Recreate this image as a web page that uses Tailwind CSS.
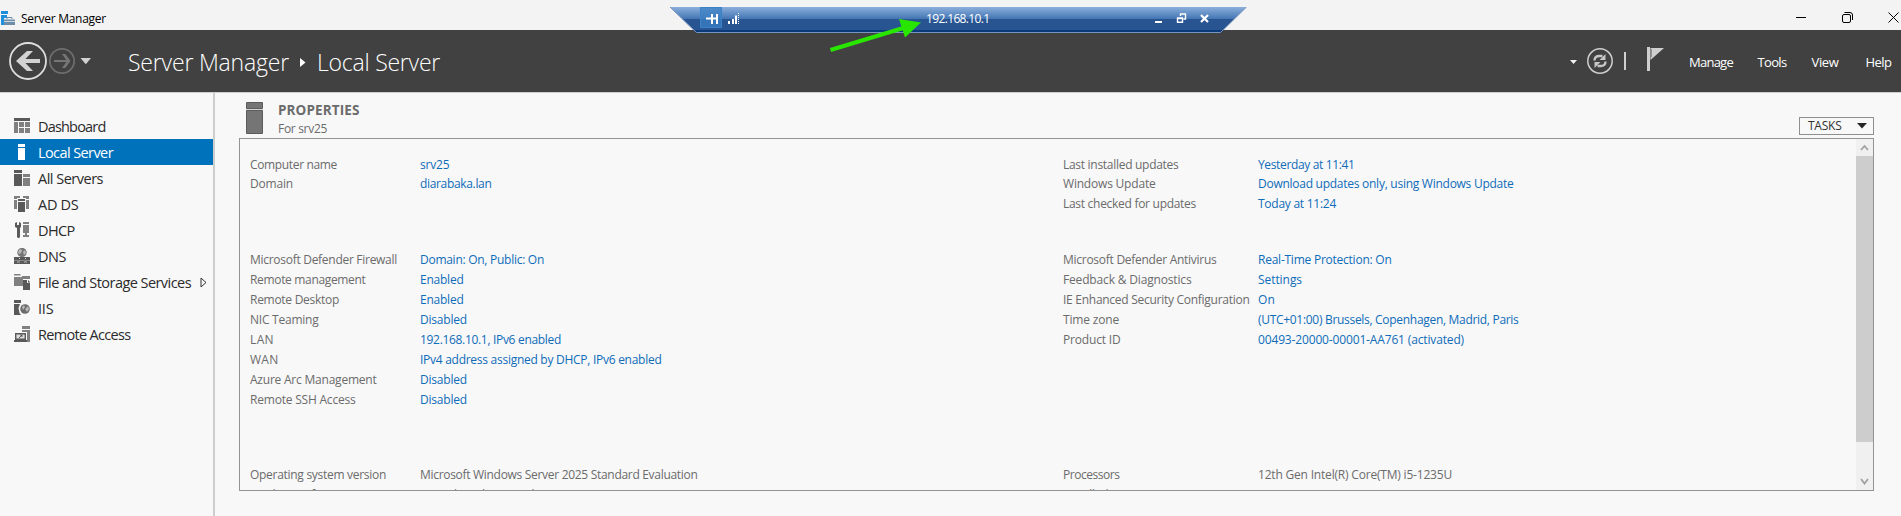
<!DOCTYPE html>
<html lang="en">
<head>
<meta charset="utf-8">
<title>Server Manager</title>
<script src="https://cdn.jsdelivr.net/npm/@tailwindcss/browser@4"></script>
</head>
<body class="relative flex h-[516px] w-[1901px] flex-col overflow-hidden bg-[#f8f8f8] font-['Open_Sans','Noto_Sans',sans-serif] text-[12px] text-[#6b6b6b]">

<!-- Window title bar -->
<div class="flex h-[30px] shrink-0 items-start bg-[#f3f3f3] text-black">
  <svg class="mt-[11px] h-[15px] w-[16px]" viewBox="0 0 16 15"><path d="M1 0h7v3H1zM1 4h6v3H4v7H1z" fill="#1e8fdc"/><path d="M4 8.500h11V14H4z" fill="#6f8da8"/><path d="M4 10.500h11" stroke="#c8d6e2"/><path d="M7 8V6.500h5V8" fill="none" stroke="#6f8da8"/></svg>
  <span data-w="83.5" class="mt-[10px] ml-[5px] leading-[18px] whitespace-nowrap">Server Manager</span>
  <div class="mt-[12px] mr-[2px] ml-auto flex gap-[35px]">
    <svg class="h-[11px] w-[11px]" viewBox="0 0 11 11"><path d="M0 5.500h10" stroke="#000"/></svg>
    <svg class="h-[11px] w-[11px]" viewBox="0 0 11 11" fill="none" stroke="#000"><rect x=".5" y="2.500" width="8" height="8" rx="1.500"/><path d="M2.500 .5h5.500a2.500 2.500 0 0 1 2.500 2.500v5"/></svg>
    <svg class="h-[11px] w-[11px]" viewBox="0 0 11 11"><path d="M.5 .5l10 10M10.500 .5l-10 10" stroke="#000"/></svg>
  </div>
</div>

<!-- Header -->
<header class="flex h-[62px] shrink-0 items-start bg-[#414141] text-white">
  <svg class="mt-[11px] ml-[8px] h-[40px] w-[84px]" viewBox="8 41 84 40" fill="none">
    <circle cx="28" cy="61" r="18" stroke="#dedede" stroke-width="1.800"/>
    <path d="M40 61H20" stroke="#d2d2d2" stroke-width="4"/><path d="M27 51h6l-9.500 10L33 71h-6L16 61z" fill="#d2d2d2"/>
    <circle cx="62" cy="61" r="12.200" stroke="#6e6e6e" stroke-width="1.700"/>
    <path d="M54 61h13" stroke="#757575" stroke-width="2"/><path d="M62 54h3.300l5.200 7-5.200 7H62l5-7z" fill="#757575"/>
    <path d="M80.500 58h10.500l-5.200 6.300z" fill="#d2d2d2"/>
  </svg>
  <div class="ml-[36px] flex items-center pt-[16px] text-[23px] leading-[32px] font-light whitespace-nowrap">
    <span data-w="159.5">Server Manager</span>
    <svg class="mr-[11px] ml-[11px] h-[9px] w-[6px]" viewBox="0 0 6 9"><path d="M0 0l5.500 4.500L0 9z" fill="#fff"/></svg>
    <span data-w="121.5">Local Server</span>
  </div>
  <svg class="mt-[14px] ml-auto h-[34px] w-[100px] shrink-0" viewBox="1568 44 100 34" fill="none">
    <path d="M1570 60h7l-3.500 4z" fill="#f2f2f2"/>
    <circle cx="1600" cy="61" r="12.200" stroke="#cfcfcf" stroke-width="1.500"/>
    <path d="M1594.500 60.500c0-3.200 2.500-4.500 5-4.500h3M1605.500 61.500c0 3.200-2.500 4.500-5 4.500h-3" stroke="#c6c6c6" stroke-width="2.300"/>
    <path d="M1605.500 54v6h-6zM1594.500 68v-6h6z" fill="#c6c6c6"/>
    <path d="M1625 52v18" stroke="#cfcfcf" stroke-width="2"/>
    <path d="M1648.500 47v24" stroke="#cfcfcf" stroke-width="3"/><path d="M1650.500 48h13.500l-13.500 12z" fill="#cfcfcf"/><path d="M1651.500 49v8" stroke="#777" stroke-width=".7"/>
  </svg>
  <nav class="ml-[21px] flex w-[212px] pt-[22px] text-[13px] leading-[20px] whitespace-nowrap">
    <span class="w-[68.500px]"><span data-w="42.500">Manage</span></span>
    <span class="w-[54px]"><span data-w="27.500">Tools</span></span>
    <span class="w-[54px]"><span data-w="25.500">View</span></span>
    <span data-w="24.500">Help</span>
  </nav>
</header>

<main class="flex min-h-0 grow border-t border-[#cfcfcf]">
  <!-- Role navigation -->
  <aside class="flex w-[215px] shrink-0 flex-col border-r-2 border-[#cecece] pt-[20px] text-[14.500px] leading-[28px] whitespace-nowrap text-[#2b2b2b]">
    <div class="flex h-[26px] items-start pl-[14px]">
      <svg class="mt-[5px] mr-[8px] h-4 w-4" viewBox="0 0 16 16"><path d="M0 0h16v3H0z" fill="#595959"/><path d="M0 4h4v11H0zM5 4h5v5H5zM11 4h5v5h-5zM5 10h5v5H5zM11 10h5v5h-5z" fill="#808080"/></svg>
      <span data-w="66">Dashboard</span></div>
    <div class="flex h-[26px] items-start bg-[#0072bc] pl-[14px] text-white">
      <svg class="mt-[5px] mr-[8px] h-4 w-4" viewBox="0 0 16 16"><path d="M4 0h7v3H4zM4 4h7v12H4z" fill="#fff"/></svg>
      <span data-w="73.5">Local Server</span></div>
    <div class="flex h-[26px] items-start pl-[14px]">
      <svg class="mt-[5px] mr-[8px] h-4 w-4" viewBox="0 0 16 16"><path d="M0 0h8v3H0zM0 4h8v12H0z" fill="#595959"/><path d="M9 4h7v3H9zM9 8h7v8H9z" fill="#808080"/></svg>
      <span data-w="63.500">All Servers</span></div>
    <div class="flex h-[26px] items-start pl-[14px]">
      <svg class="mt-[5px] mr-[8px] h-4 w-4" viewBox="0 0 16 16"><path d="M0 0h6v2H3v1H0zM0 4h3v9H0zM9 0h6v3h-3V2H9zM12 4h3v9h-3z" fill="#808080"/><path d="M4 3h7v2H4zM4 6h7v10H4z" fill="#595959"/></svg>
      <span data-w="39">AD DS</span></div>
    <div class="flex h-[26px] items-start pl-[14px]">
      <svg class="mt-[5px] mr-[8px] h-4 w-4" viewBox="0 0 16 16"><path d="M1 1l2-1v3h2V0l2 1v4L6 6v8.500a1.500 1.500 0 0 1-3 0V6L1 5z" fill="#595959"/><path d="M9 0h6v2H9zM9 3h6v8H9zM11 11h2v2h2v2H9v-2h2z" fill="#808080"/></svg>
      <span data-w="35">DHCP</span></div>
    <div class="flex h-[26px] items-start pl-[14px]">
      <svg class="mt-[5px] mr-[8px] h-4 w-4" viewBox="0 0 16 16"><circle cx="8" cy="4.500" r="4.700" fill="#777"/><path d="M5 2l2-1 1 2-2 3-2-1zM9 4l2-2 1 3-2 2z" fill="#bbb"/><path d="M0 9h16v3H0zM0 13h16v3H0z" fill="#595959"/><path d="M0 12.500h16" stroke="#888"/><path d="M5 10h1v1H5zM11 10h1v1h-1z" fill="#ddd"/><path d="M3 14h3M10 14h3" stroke="#bbb"/></svg>
      <span data-w="26.500">DNS</span></div>
    <div class="flex h-[26px] items-start pl-[14px]">
      <svg class="mt-[5px] mr-[8px] h-4 w-4" viewBox="0 0 16 16"><path d="M0 0h6l1 1.500H0zM0 3h8v9H0zM8 2h8v3H9v7H8z" fill="#808080"/><path d="M9 6h4v3h3v7H9z" fill="#595959"/><path d="M14 6l2.500 2.500H14z" fill="#595959"/></svg>
      <span data-w="151.500">File and Storage Services</span>
      <svg class="mt-[8px] ml-[9px] h-[11px] w-[8px]" viewBox="0 0 8 11"><path d="M1 1l5 4.500L1 10z" fill="none" stroke="#333"/></svg></div>
    <div class="flex h-[26px] items-start pl-[14px]">
      <svg class="mt-[5px] mr-[8px] h-4 w-4" viewBox="0 0 16 16"><path d="M0 0h7v3H0zM0 4h6L4.500 8l1 5 1.500 2H0z" fill="#595959"/><circle cx="11" cy="9" r="4.800" fill="#6b6b6b"/><path d="M8 7l2-2 1 2-2 3zM11 9l3-3 1 3-2 3z" fill="#b8b8b8"/></svg>
      <span data-w="14">IIS</span></div>
    <div class="flex h-[26px] items-start pl-[14px]">
      <svg class="mt-[5px] mr-[8px] h-4 w-4" viewBox="0 0 16 16"><path d="M8 0h8v3H8zM8 4h8v12h-3V6H8z" fill="#808080"/><path d="M1.700 7.700h9.600v5.600H1.700z" fill="#ddd" stroke="#595959" stroke-width="1.400"/><path d="M0 15h13" stroke="#595959" stroke-width="2"/><path d="M5 12l3-3M6 9h2v2" stroke="#595959" fill="none"/></svg>
      <span data-w="91">Remote Access</span></div>
  </aside>

  <!-- Properties tile -->
  <section class="flex w-[1659px] flex-col pl-[24px] whitespace-nowrap">
    <div class="flex h-[45px] shrink-0 items-start">
      <svg class="mt-[9px] ml-[7px] h-[32px] w-[17px]" viewBox="0 0 17 32"><path d="M.5 .5h16v6H.5zM.5 8.500h16v23H.5z" fill="#757575" stroke="#5c5c5c"/><path d="M0 7.500h17" stroke="#d5d5d5"/></svg>
      <div class="ml-[15px] flex flex-col items-start">
        <span data-w="80" class="mt-[7px] text-[13.500px] leading-[20px] font-bold">PROPERTIES</span>
        <span data-w="47.500" class="text-[12px] leading-[17px]">For srv25</span>
      </div>
      <div class="mt-[24px] ml-auto flex h-[18px] w-[75px] items-center border border-[#8f8f8f] pl-[8px] text-[#333]">
        <span data-w="32" class="leading-[16px]">TASKS</span>
        <svg class="ml-[15px] h-[6px] w-[10px]" viewBox="0 0 10 6"><path d="M0 0h10L5 5.500z" fill="#262626"/></svg>
      </div>
    </div>
    <div class="flex h-[353px] overflow-hidden border border-[#939393] leading-[20px]">
      <div class="grid h-[380px] w-[813px] shrink-0 auto-rows-[20px] grid-cols-[170px_1fr] content-start pt-[16px] pl-[10px]">
        <span><span data-w="85.500">Computer name</span></span><span class="text-[#0f6cb8]"><span data-w="28">srv25</span></span>
        <span class="-mt-px"><span data-w="41.500">Domain</span></span><span class="-mt-px text-[#0f6cb8]"><span data-w="70">diarabaka.lan</span></span>
        <div class="col-span-2"></div>
        <div class="col-span-2"></div>
        <div class="col-span-2 -mt-[6px] grid auto-rows-[20px] grid-cols-[170px_1fr] pt-[21px]">
          <span><span data-w="145.500">Microsoft Defender Firewall</span></span><span class="text-[#0f6cb8]"><span data-w="122.500">Domain: On, Public: On</span></span>
          <span><span data-w="114">Remote management</span></span><span class="text-[#0f6cb8]"><span data-w="42">Enabled</span></span>
          <span><span data-w="87.500">Remote Desktop</span></span><span class="text-[#0f6cb8]"><span data-w="42">Enabled</span></span>
          <span><span data-w="67">NIC Teaming</span></span><span class="text-[#0f6cb8]"><span data-w="45.500">Disabled</span></span>
          <span><span data-w="22.500">LAN</span></span><span class="text-[#0f6cb8]"><span data-w="139.500">192.168.10.1, IPv6 enabled</span></span>
          <span><span data-w="27">WAN</span></span><span class="text-[#0f6cb8]"><span data-w="240">IPv4 address assigned by DHCP, IPv6 enabled</span></span>
          <span><span data-w="125">Azure Arc Management</span></span><span class="text-[#0f6cb8]"><span data-w="45.500">Disabled</span></span>
          <span><span data-w="104">Remote SSH Access</span></span><span class="text-[#0f6cb8]"><span data-w="45.500">Disabled</span></span>
          <div class="col-span-2 row-span-2"></div>
          <div class="col-span-2 grid auto-rows-[20px] grid-cols-[170px_1fr] pt-[15px]">
            <span><span data-w="134.500">Operating system version</span></span><span><span data-w="276">Microsoft Windows Server 2025 Standard Evaluation</span></span>
            <span><span data-w="109">Hardware information</span></span><span><span data-w="133">innotek GmbH VirtualBox</span></span>
          </div>
        </div>
      </div>
      <div class="grid h-[380px] w-[803px] shrink-0 auto-rows-[20px] grid-cols-[195px_1fr] content-start pt-[16px] pl-[10px]">
        <span><span data-w="114">Last installed updates</span></span><span class="text-[#0f6cb8]"><span data-w="95">Yesterday at 11:41</span></span>
        <span class="-mt-px"><span data-w="91">Windows Update</span></span><span class="-mt-px text-[#0f6cb8]"><span data-w="254">Download updates only, using Windows Update</span></span>
        <span class="-mt-px"><span data-w="131.500">Last checked for updates</span></span><span class="-mt-px text-[#0f6cb8]"><span data-w="76.500">Today at 11:24</span></span>
        <div class="col-span-2"></div>
        <div class="col-span-2 -mt-[6px] grid auto-rows-[20px] grid-cols-[195px_1fr] pt-[21px]">
          <span><span data-w="152">Microsoft Defender Antivirus</span></span><span class="text-[#0f6cb8]"><span data-w="132">Real-Time Protection: On</span></span>
          <span><span data-w="127">Feedback &amp; Diagnostics</span></span><span class="text-[#0f6cb8]"><span data-w="42.500">Settings</span></span>
          <span><span data-w="185">IE Enhanced Security Configuration</span></span><span class="text-[#0f6cb8]"><span data-w="15.500">On</span></span>
          <span><span data-w="54.500">Time zone</span></span><span class="text-[#0f6cb8]"><span data-w="259">(UTC+01:00) Brussels, Copenhagen, Madrid, Paris</span></span>
          <span><span data-w="56">Product ID</span></span><span class="text-[#0f6cb8]"><span data-w="204.500">00493-20000-00001-AA761 (activated)</span></span>
          <div class="col-span-2 row-span-5"></div>
          <div class="col-span-2 grid auto-rows-[20px] grid-cols-[195px_1fr] pt-[15px]">
            <span><span data-w="55">Processors</span></span><span><span data-w="192.500">12th Gen Intel(R) Core(TM) i5-1235U</span></span>
            <span><span data-w="127">Installed memory (RAM)</span></span><span><span data-w="23">4 GB</span></span>
          </div>
        </div>
      </div>
      <div class="flex w-[17px] shrink-0 flex-col items-center bg-[#f0f0f0]">
        <svg class="h-[17px] w-[17px] shrink-0" viewBox="0 0 17 17"><path d="M5 11l3.500-4L12 11" fill="none" stroke="#a0a0a0" stroke-width="1.800"/></svg>
        <div class="h-[286px] w-full shrink-0 bg-[#cdcdcd]"></div>
        <svg class="mt-auto h-[17px] w-[17px] shrink-0" viewBox="0 0 17 17"><path d="M5 6l3.500 4.500L12 6" fill="none" stroke="#a0a0a0" stroke-width="1.800"/></svg>
      </div>
    </div>
  </section>
</main>

<!-- Remote desktop connection bar, floating over the window -->
<div class="absolute top-[7px] left-[669px] h-[26px] w-[578px] text-white">
  <svg class="absolute inset-0 h-[26px] w-[578px]" viewBox="669 7 578 26">
    <defs><linearGradient id="bar" x1="0" y1="7" x2="0" y2="33" gradientUnits="userSpaceOnUse"><stop offset="0" stop-color="#8bafdc"/><stop offset=".46" stop-color="#4375b3"/><stop offset=".46" stop-color="#285592"/><stop offset=".88" stop-color="#285592"/><stop offset=".88" stop-color="#0b3a7b"/><stop offset="1" stop-color="#0b3a7b"/></linearGradient></defs>
    <path d="M670 7h576.500L1220.500 33H696.500z" fill="url(#bar)"/>
    <path d="M670 7l26.500 25.500h524L1246.500 7" fill="none" stroke="#7795bd"/>
    <path d="M700.500 7.500h21v20h-21z" fill="#3b7fc4" fill-opacity=".75" stroke="#3c82c8"/>
    <path d="M706 18.500h5M712 14v10M712 18.500h4M717 14v10" stroke="#fff" stroke-width="2"/>
    <path d="M729 21v3M733 19v5" stroke="#fff" stroke-width="2"/><path d="M736 15.500v8.500" stroke="#fff" stroke-width="2"/><path d="M738.500 13v11" stroke="#fff" stroke-dasharray="1 1"/>
    <path d="M1155 22h7" stroke="#fff" stroke-width="2"/>
    <path d="M1177.500 18.500h5v3.800h-5zM1177 18h6M1180.500 16v-2h5v5h-2M1180 14h6" fill="none" stroke="#fff" stroke-width="1.400"/>
    <path d="M1201 15l7 7M1208 15l-7 7" stroke="#fff" stroke-width="2.200"/>
  </svg>
  <span data-w="62" class="absolute top-[3px] left-[257px] leading-[18px] whitespace-nowrap">192.168.10.1</span>
</div>
<!-- Callout arrow -->
<svg class="absolute top-[15px] left-[828px] h-[40px] w-[96px]" viewBox="828 15 96 40"><path d="M830.500 50L905 27.500" stroke="#29e600" stroke-width="4"/><path d="M921 22.500L899 19l6 18.500z" fill="#29e600"/></svg>

<script>
function fitLabels() {
  document.querySelectorAll('[data-w]').forEach(function (el) {
    el.style.letterSpacing = '0px';
    var r = document.createRange();
    r.selectNodeContents(el);
    var natural = r.getBoundingClientRect().width;
    el.style.letterSpacing = ((parseFloat(el.dataset.w) + 1.5 - natural) / el.textContent.length).toFixed(3) + 'px';
  });
}
fitLabels();
document.addEventListener('DOMContentLoaded', fitLabels);
window.addEventListener('load', function () {
  fitLabels();
  document.fonts.ready.then(fitLabels);
  requestAnimationFrame(fitLabels);
  setTimeout(fitLabels, 50);
});
</script>
</body>
</html>
